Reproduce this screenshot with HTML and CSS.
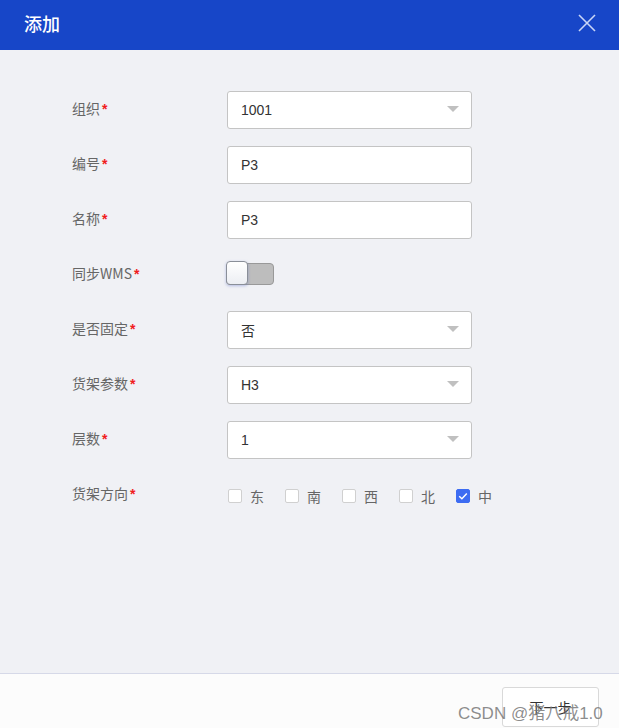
FILE: index.html
```html
<!DOCTYPE html>
<html lang="zh">
<head>
<meta charset="utf-8">
<title>添加</title>
<link rel="stylesheet" href="styles.css">
</head>
<body>
<div class="dialog">
  <header class="dlg-head">
    <span class="dlg-title">添加</span>
    <svg class="dlg-close" width="18" height="18" viewBox="0 0 18 18"><path d="M1 1L17 17M17 1L1 17" stroke="#c9d6f7" stroke-width="1.6" fill="none"/></svg>
  </header>
  <main class="dlg-body">
    <div class="row">
      <label class="lbl">组织<span class="req">*</span></label>
      <div class="select"><span>1001</span><i class="caret"></i></div>
    </div>
    <div class="row">
      <label class="lbl">编号<span class="req">*</span></label>
      <div class="input">P3</div>
    </div>
    <div class="row">
      <label class="lbl">名称<span class="req">*</span></label>
      <div class="input">P3</div>
    </div>
    <div class="row">
      <label class="lbl">同步WMS<span class="req">*</span></label>
      <div class="switch"><span class="knob"></span></div>
    </div>
    <div class="row">
      <label class="lbl">是否固定<span class="req">*</span></label>
      <div class="select"><span>否</span><i class="caret"></i></div>
    </div>
    <div class="row">
      <label class="lbl">货架参数<span class="req">*</span></label>
      <div class="select"><span>H3</span><i class="caret"></i></div>
    </div>
    <div class="row">
      <label class="lbl">层数<span class="req">*</span></label>
      <div class="select"><span>1</span><i class="caret"></i></div>
    </div>
    <div class="row">
      <label class="lbl">货架方向<span class="req">*</span></label>
      <div class="checks">
        <span class="chk"><i class="box"></i>东</span>
        <span class="chk"><i class="box"></i>南</span>
        <span class="chk"><i class="box"></i>西</span>
        <span class="chk"><i class="box"></i>北</span>
        <span class="chk"><i class="box on"><svg width="14" height="14" viewBox="0 0 14 14"><path d="M3.2 7.2L5.9 9.8L10.8 4.6" stroke="#fff" stroke-width="1.5" fill="none"/></svg></i>中</span>
      </div>
    </div>
  </main>
  <footer class="dlg-foot">
    <button class="btn">下一步</button>
    <span class="watermark">CSDN @猪八戒1.0</span>
  </footer>
</div>
</body>
</html>
```
FILE: styles.css
```css
html, body {
  margin: 0;
  padding: 0;
}
body {
  width: 619px;
  height: 728px;
  overflow: hidden;
  font-family: "Liberation Sans", "Noto Sans CJK SC", sans-serif;
  background: #f0f1f5;
}
.dialog {
  display: flex;
  flex-direction: column;
  height: 728px;
}
.dlg-head {
  height: 50px;
  flex: none;
  background: #1746c8;
  display: flex;
  align-items: center;
  justify-content: space-between;
  padding: 0 23px 0 24px;
}
.dlg-title {
  color: #fff;
  font-size: 18px;
  font-weight: 500;
  font-family: "Noto Sans CJK SC", sans-serif;
  margin-top: -4px;
}
.dlg-close {
  margin-top: -5px;
}
.dlg-body {
  flex: 1;
  padding: 41px 0 0 72px;
  display: flex;
  flex-direction: column;
  gap: 17px;
}
.row {
  display: flex;
  align-items: center;
  height: 38px;
}
.lbl {
  width: 155px;
  flex: none;
  font-size: 14px;
  color: #666;
  font-family: "Noto Sans CJK SC", sans-serif;
  margin-top: -5px;
}
.req {
  color: #f01d1d;
  font-weight: bold;
  margin-left: 2px;
  font-family: "Liberation Sans", sans-serif;
}
.select, .input {
  box-sizing: border-box;
  width: 245px;
  height: 38px;
  background: #fff;
  border: 1px solid #c4c4c4;
  border-radius: 3px;
  display: flex;
  align-items: center;
  justify-content: space-between;
  padding: 0 12px 0 13px;
  font-size: 14px;
  color: #333;
}
.select span, .input {
  font-family: "Liberation Sans", "Noto Sans CJK SC", sans-serif;
}
.caret {
  width: 0;
  height: 0;
  border-left: 6px solid transparent;
  border-right: 6px solid transparent;
  border-top: 6px solid #c0c0c0;
  margin-top: -2px;
}
.switch {
  position: relative;
  margin-left: -1px;
  width: 48px;
  height: 22px;
  box-sizing: border-box;
  background: #bdbdbd;
  border: 1px solid #999;
  border-radius: 4px;
  margin-top: -2px;
}
.knob {
  position: absolute;
  left: -1px;
  top: -3px;
  width: 22px;
  height: 24px;
  box-sizing: border-box;
  background: linear-gradient(#fff, #eceef3);
  border: 1px solid #8a8f99;
  border-radius: 4px;
  box-shadow: 0 1px 3px rgba(90, 110, 200, 0.4);
}
.checks {
  display: flex;
  gap: 0;
  margin-left: 1px;
  margin-top: 1px;
}
.chk {
  width: 57px;
  display: flex;
  align-items: center;
  font-size: 14px;
  color: #666;
  font-family: "Noto Sans CJK SC", sans-serif;
}
.box {
  width: 14px;
  height: 14px;
  box-sizing: border-box;
  border: 1px solid #d0d0d0;
  background: #fff;
  border-radius: 2px;
  margin-right: 8px;
  display: flex;
}
.box.on {
  background: #3d6cf2;
  border-color: #3d6cf2;
}
.box.on svg {
  margin: -1px;
}
.dlg-foot {
  position: relative;
  box-sizing: border-box;
  height: 55px;
  flex: none;
  background: #fcfcfc;
  border-top: 1px solid #d6d9e8;
  display: flex;
  justify-content: flex-end;
  align-items: flex-start;
  padding: 13px 20px 0 0;
}
.btn {
  flex: none;
  width: 97px;
  height: 40px;
  background: #fff;
  border: 1px solid #d9d9d9;
  border-radius: 3px;
  font-size: 14px;
  color: #333;
  font-family: "Noto Sans CJK SC", sans-serif;
  padding: 0;
}
.watermark {
  position: absolute;
  left: 458px;
  top: 25px;
  font-size: 17px;
  color: rgba(120, 120, 120, 0.85);
  font-family: "Liberation Sans", "Noto Sans CJK SC", sans-serif;
  white-space: nowrap;
}
```
